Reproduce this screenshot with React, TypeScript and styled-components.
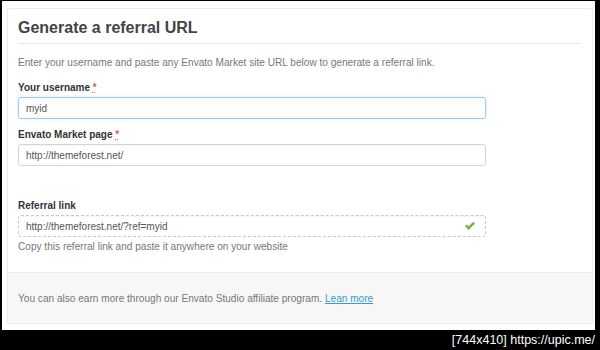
import React from "react";
import styled, { createGlobalStyle } from "styled-components";

const Global = createGlobalStyle`
  html, body { margin: 0; padding: 0; background: #000; }
  body { font-family: "Liberation Sans", Arial, sans-serif; width: 600px; height: 350px; overflow: hidden; }
  * { box-sizing: border-box; }
`;

const Page = styled.div`
  margin: 1px 0 0 2px;
  width: 593px;
  height: 329px;
  background: #fff;
  padding: 7px 2px 6px 5px;
`;

const Card = styled.div`
  height: 100%;
  border: 1px solid #ececec;
  border-radius: 2px;
  display: flex;
  flex-direction: column;
  background: #fff;
`;

const Body = styled.div`
  padding: 9px 11px 0 10px;
  flex: 1;
`;

const Title = styled.h2`
  margin: 0;
  font-size: 16px;
  line-height: 20px;
  font-weight: bold;
  color: #444;
`;

const Rule = styled.hr`
  margin: 5px 0 0;
  border: 0;
  border-top: 1px solid #e9e9e9;
  height: 0;
`;

const Text = styled.p<{ $top: number }>`
  margin: ${(p) => p.$top}px 0 0;
  font-size: 10.1px;
  line-height: 12px;
  color: #777;
`;

const Field = styled.div<{ $top: number }>`
  margin-top: ${(p) => p.$top}px;
  width: 468px;
`;

const Label = styled.label`
  display: block;
  font-size: 10px;
  line-height: 12px;
  font-weight: bold;
  color: #333;
  margin-bottom: 3px;
`;

const Req = styled.abbr`
  color: #e0603a;
  text-decoration: underline dotted;
`;

const Input = styled.div<{ $focus?: boolean; $dashed?: boolean }>`
  height: 22px;
  display: flex;
  align-items: center;
  justify-content: space-between;
  padding: 0 9px 0 7px;
  font-size: 10px;
  color: #555;
  background: #fff;
  border-radius: 3px;
  border: 1px ${(p) => (p.$dashed ? "dashed" : "solid")}
    ${(p) => (p.$focus ? "#9fcdee" : p.$dashed ? "#c9c9c9" : "#d5d5d5")};
  box-shadow: ${(p) =>
    p.$focus ? "0 0 3px rgba(120, 180, 230, 0.35)" : "inset 0 1px 1px rgba(0,0,0,0.04)"};
`;

const Footer = styled.div`
  height: 51px;
  border-top: 1px solid #ececec;
  background: #f7f7f7;
  padding: 20px 10px 0;
  font-size: 10.1px;
  line-height: 12px;
  color: #777;
`;

const Link = styled.a`
  color: #3a9bd5;
  text-decoration: underline;
`;

const Bottom = styled.div`
  height: 20px;
  display: flex;
  justify-content: flex-end;
  align-items: center;
  padding-right: 5px;
`;

const Stamp = styled.span`
  font-family: "Liberation Sans", Arial, sans-serif;
  font-size: 12.5px;
  color: #fff;
`;

const Check = () => (
  <svg width="12" height="10" viewBox="0 0 12 10">
    <path d="M1 5.3 L2.8 3.5 L4.6 5.3 L9.2 0.8 L11 2.6 L4.6 9 Z" fill="#7cb342" />
  </svg>
);

export default function App() {
  return (
    <>
      <Global />
      <Page>
        <Card>
          <Body>
            <Title>Generate a referral URL</Title>
            <Rule />
            <Text $top={13}>
              Enter your username and paste any Envato Market site URL below to generate a referral link.
            </Text>
            <Field $top={13}>
              <Label>
                Your username <Req title="required">*</Req>
              </Label>
              <Input $focus>myid</Input>
            </Field>
            <Field $top={10}>
              <Label>
                Envato Market page <Req title="required">*</Req>
              </Label>
              <Input>http://themeforest.net/</Input>
            </Field>
            <Field $top={34}>
              <Label>Referral link</Label>
              <Input $dashed>
                <span>http://themeforest.net/?ref=myid</span>
                <Check />
              </Input>
            </Field>
            <Text $top={4}>Copy this referral link and paste it anywhere on your website</Text>
          </Body>
          <Footer>
            You can also earn more through our Envato Studio affiliate program.{" "}
            <Link href="#">Lean more</Link>
          </Footer>
        </Card>
      </Page>
      <Bottom>
        <Stamp>[744x410] https://upic.me/</Stamp>
      </Bottom>
    </>
  );
}
